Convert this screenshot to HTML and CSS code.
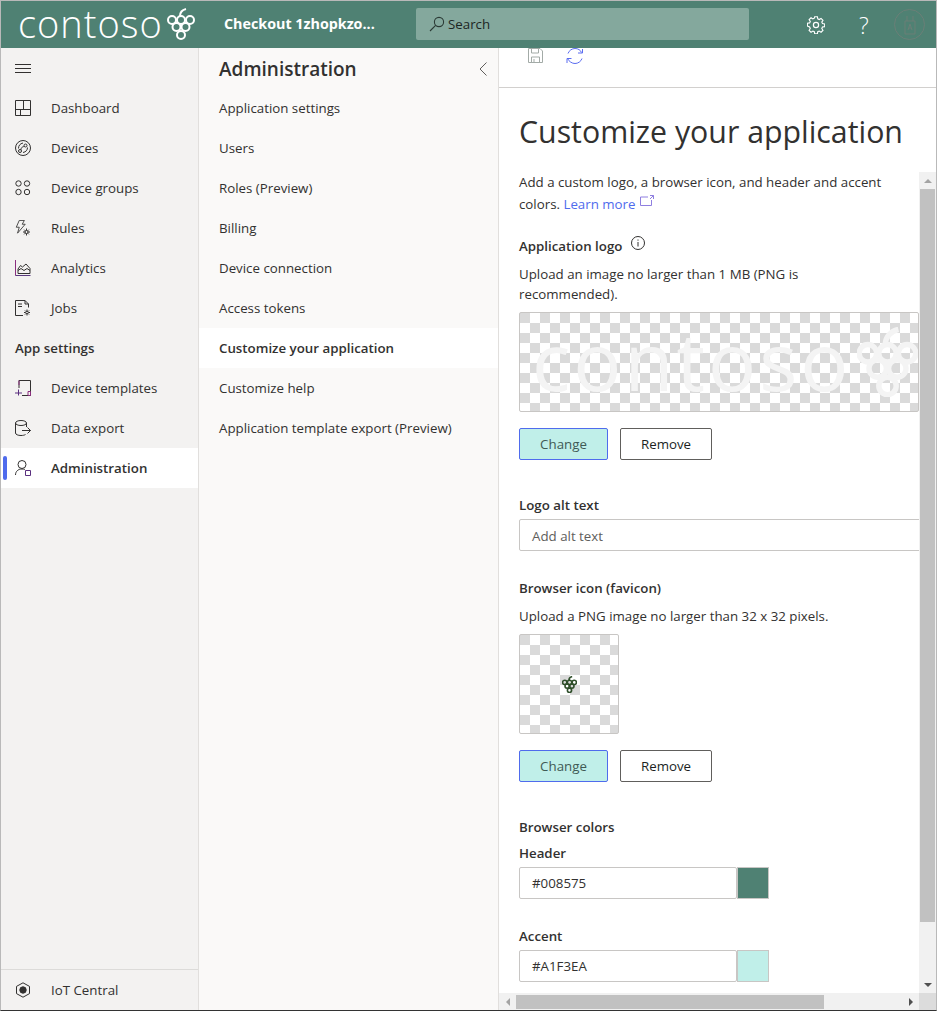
FILE: index.html
```html
<!DOCTYPE html>
<html lang="en">
<head>
  <meta charset="UTF-8">
  <title>Customize your application</title>
  <link rel="stylesheet" href="styles.css">
</head>
<body>
  <svg class="defs" width="0" height="0">
    <symbol id="grapes" viewBox="0 0 28 32">
      <g fill="none" stroke="currentColor">
        <path d="M13 8c0-3 2-6 6-7"/>
        <circle cx="5" cy="12" r="4"/>
        <circle cx="14" cy="12" r="4"/>
        <circle cx="23" cy="12" r="4"/>
        <circle cx="9.500" cy="19" r="4"/>
        <circle cx="18.500" cy="19" r="4"/>
        <circle cx="14" cy="27" r="4"/>
      </g>
    </symbol>
  </svg>

  <div class="window">
    <header class="topbar">
      <div class="brand">
        <span class="brand-name">contoso</span>
        <svg class="brand-mark"><use href="#grapes"/></svg>
      </div>
      <div class="app-name">Checkout 1zhopkzo...</div>
      <div class="search">
        <svg width="16" height="16" viewBox="0 0 16 16" fill="none" stroke="#2b3a35" stroke-width="1.100">
          <circle cx="10" cy="6" r="4.600"/>
          <path d="M6.600 9.400 1 15"/>
        </svg>
        <span>Search</span>
      </div>
      <div class="top-actions">
        <svg class="top-icon" width="18" height="18" viewBox="0 0 18 18" fill="none" stroke="#fff" stroke-width="1.200">
          <circle cx="9" cy="9" r="2.600"/>
          <path d="M7.600 1h2.800l.4 2.200 1.500.7 1.900-1.200 2 2-1.200 1.900.7 1.500 2.300.4v2.800l-2.300.4-.7 1.500 1.200 1.900-2 2-1.900-1.200-1.500.7-.4 2.200H7.600l-.4-2.200-1.500-.7-1.900 1.200-2-2 1.200-1.900-.7-1.500L0 10.600V7.800l2.300-.4.7-1.500-1.200-1.900 2-2 1.900 1.200 1.500-.7z" transform="translate(.4 -.2) scale(.96)"/>
        </svg>
        <span class="help">?</span>
        <div class="avatar">
          <svg width="12" height="20" viewBox="0 0 12 20" fill="none" stroke="#6a7f77" stroke-width="1">
            <path d="M1 6h10v13H1zM3 6V1M9 6V1M4 15l2-6 2 6M4.800 13h2.400"/>
          </svg>
        </div>
      </div>
    </header>

    <div class="body">
      <nav class="sidebar">
        <div class="nav-row">
          <svg class="nav-icon" viewBox="0 0 16 16" fill="none" stroke="#323130"><path d="M0 4.500h16M0 8.500h16M0 12.500h16"/></svg>
        </div>
        <a class="nav-row">
          <svg class="nav-icon" viewBox="0 0 16 16" fill="none" stroke="#323130"><path d="M.5.500h15v15H.5zM8.500.500v9M.5 9.500h15M5.500 9.500v6"/></svg>
          <span>Dashboard</span>
        </a>
        <a class="nav-row">
          <svg class="nav-icon" viewBox="0 0 16 16" fill="none" stroke="#323130"><circle cx="8" cy="8" r="7.500"/><circle cx="5" cy="11" r="1.500"/><circle cx="10.500" cy="5.500" r="1.500"/><path d="M6 9.800c0-1.500.5-2.300 1.500-2.800 1-.5 2-.6 2-.6M3.500 8.500c0-3 1.500-4.800 4.500-5.500M12.500 7.500c0 2.500-1.500 4.500-4.500 5"/></svg>
          <span>Devices</span>
        </a>
        <a class="nav-row">
          <svg class="nav-icon" viewBox="0 0 16 16" fill="none" stroke="#323130"><circle cx="3.500" cy="3.500" r="2.700"/><circle cx="12" cy="3.500" r="2.700"/><circle cx="3.500" cy="12" r="2.700"/><circle cx="12" cy="12" r="2.700"/></svg>
          <span>Device groups</span>
        </a>
        <a class="nav-row">
          <svg class="nav-icon" viewBox="0 0 16 16" fill="none" stroke="#323130"><path d="M5 .5h6L8.500 5H12L3 15.500l2-7H1.500z" transform="scale(.85)"/><circle cx="11.500" cy="12" r="1.500"/><path d="M11.500 8.500v2M11.500 13.500v2M8 12h2M13 12h2M9.200 9.700l1.200 1.200M12.600 13.100l1.200 1.200M9.200 14.300l1.200-1.200M12.600 10.900l1.200-1.200"/></svg>
          <span>Rules</span>
        </a>
        <a class="nav-row">
          <svg class="nav-icon" viewBox="0 0 16 16" fill="none" stroke="#323130"><path d="M.5 0v15.500" stroke="#8a2f7f"/><path d="M.5 15.500H15.500" stroke="#5a3a7f"/><path d="M3 13.500h12v-5L11 4 7.500 7 5.500 5.500 3 9zM3 10.500l3-2 3 2 3-2 3 2"/></svg>
          <span>Analytics</span>
        </a>
        <a class="nav-row">
          <svg class="nav-icon" viewBox="0 0 16 16" fill="none" stroke="#323130"><path d="M8 15.500H.5V.5H10l3.500 3.500v3.500M10 .5V4h3.500M3 4h4M3 6.500h4"/><circle cx="12" cy="12.500" r="1.300"/><path d="M12 9.500v1.500M12 14v1.500M9 12.500h1.500M13.500 12.500H15M10 10.500l1 1M13 13.500l1 1M10 14.500l1-1M13 11.500l1-1"/></svg>
          <span>Jobs</span>
        </a>
        <div class="nav-row nav-heading">App settings</div>
        <a class="nav-row">
          <svg class="nav-icon" viewBox="0 0 16 16" fill="none" stroke="#323130"><path d="M4 8V.5h11.500v15H7" /><path d="M4 .5V5" stroke="#8a2f7f"/><path d="M0 13h7M3.500 9.500v6" stroke="#5a2f7f"/><path d="M13 11.500h2.500v4H13z" stroke="#8a2f7f"/></svg>
          <span>Device templates</span>
        </a>
        <a class="nav-row">
          <svg class="nav-icon" viewBox="0 0 16 16" fill="none" stroke="#323130"><ellipse cx="6" cy="3" rx="5.500" ry="2.500"/><path d="M.5 3v10c0 1.500 2.500 2.500 5.500 2.500 2 0 3.500-.4 4.500-1M11.500 3v4M7 10.500h8.500M12.500 7.500l3 3-3 3"/></svg>
          <span>Data export</span>
        </a>
        <a class="nav-row nav-active">
          <svg class="nav-icon" viewBox="0 0 16 16" fill="none" stroke="#323130"><circle cx="7" cy="4.500" r="4"/><path d="M.5 15c0-3.500 2.500-6 6.500-6 1 0 2 .2 2.800.5"/><path d="M10.500 10.500h5v5h-5z" stroke="#5a2f7f"/></svg>
          <span>Administration</span>
        </a>
        <a class="nav-row nav-foot">
          <svg class="nav-icon" viewBox="0 0 16 16" fill="none" stroke="#323130"><path d="M8 .8 14.500 4.400v7.200L8 15.200 1.500 11.600V4.400z"/><circle cx="8" cy="8" r="3.200" fill="#323130"/></svg>
          <span>IoT Central</span>
        </a>
      </nav>

      <aside class="subnav">
        <div class="subnav-head">
          <h2>Administration</h2>
          <svg width="8" height="14" viewBox="0 0 8 14" fill="none" stroke="#605e5c"><path d="M7.500.5 1 7l6.500 6.500"/></svg>
        </div>
        <a class="sub-row">Application settings</a>
        <a class="sub-row">Users</a>
        <a class="sub-row">Roles (Preview)</a>
        <a class="sub-row">Billing</a>
        <a class="sub-row">Device connection</a>
        <a class="sub-row">Access tokens</a>
        <a class="sub-row sub-active">Customize your application</a>
        <a class="sub-row">Customize help</a>
        <a class="sub-row">Application template export (Preview)</a>
      </aside>

      <main class="main">
        <div class="toolbar">
          <svg width="15" height="15" viewBox="0 0 15 15" fill="none" stroke="#a3aba7"><path d="M.5.500h11.500l2.500 2.500v11.500H.5zM3.500.500v4.500h7V.500M3.500 14.500V9h8v5.500M6 11v3.500"/></svg>
          <svg width="18" height="16" viewBox="0 0 18 16" fill="none" stroke="#5a6cf0"><path d="M2 5.500C3 2.500 6 .5 9 .5c3 0 5.500 1.500 6.500 4M1.500 10.500c1.500 3 4.500 5 7.500 5 3 0 6-2 7-5"/><path d="M16.500 1v4H12M1 15v-4.500h4.500"/></svg>
        </div>
        <h1 class="page-title">Customize your application</h1>

        <div class="scroll-row">
          <div class="scroll-body">
            <p class="intro">Add a custom logo, a browser icon, and header and accent colors. <a class="link">Learn more</a>
              <svg class="ext" width="14" height="11" viewBox="0 0 14 11" fill="none" stroke="#8f7fe0"><path d="M8 2H.5v8.500h11V5M10 .5h3.500V4M13.500.5 10 4"/></svg>
            </p>

            <div class="label label-logo">Application logo
              <svg class="info" width="14" height="14" viewBox="0 0 14 14" fill="none" stroke="#323130"><circle cx="7" cy="7" r="6.500"/><path d="M7 6v4.500M7 3.500v1.200"/></svg>
            </div>
            <p class="hint">Upload an image no larger than 1 MB (PNG is recommended).</p>
            <div class="checker logo-box"><span class="logo-name">contoso</span><svg class="logo-mark"><use href="#grapes"/></svg></div>
            <div class="btns">
              <button class="btn btn-primary">Change</button>
              <button class="btn">Remove</button>
            </div>

            <div class="label label-alt">Logo alt text</div>
            <div class="field field-wide">Add alt text</div>

            <div class="label label-fav">Browser icon (favicon)</div>
            <p class="hint hint-fav">Upload a PNG image no larger than 32 x 32 pixels.</p>
            <div class="checker fav-box"><svg class="fav-mark"><use href="#grapes"/></svg></div>
            <div class="btns">
              <button class="btn btn-primary">Change</button>
              <button class="btn">Remove</button>
            </div>

            <div class="label label-colors">Browser colors</div>
            <div class="label label-sub">Header</div>
            <div class="color-row">
              <div class="field field-color">#008575</div>
              <div class="swatch swatch-header"></div>
            </div>
            <div class="label label-accent">Accent</div>
            <div class="color-row">
              <div class="field field-color">#A1F3EA</div>
              <div class="swatch swatch-accent"></div>
            </div>
          </div>
          <div class="vbar">
            <span class="sb-btn"><i class="arrow arrow-up"></i></span>
            <span class="vthumb"></span>
            <span class="sb-btn"><i class="arrow arrow-down"></i></span>
          </div>
        </div>

        <div class="hbar">
          <span class="sb-btn"><i class="arrow arrow-left"></i></span>
          <span class="hthumb"></span>
          <span class="sb-btn"><i class="arrow arrow-right"></i></span>
          <span class="corner"></span>
        </div>
      </main>
    </div>
  </div>
</body>
</html>
```

FILE: styles.css
```css
*{
  margin: 0;
  padding: 0;
  box-sizing: border-box;
}
html,body{
  height: 100%;
  background: #fff;
}
body{
  font-family: "Open Sans", "Liberation Sans", sans-serif;
  font-size: 13.3px;
  color: #323130;
}
.defs{
  position: absolute;
}

.window{
  width: 937px;
  height: 1011px;
  display: flex;
  flex-direction: column;
  border-top: 1px solid #b9b9b9;
  border-left: 1px solid #b9b9b9;
  border-right: 1px solid #b9b9b9;
  border-bottom: 1px solid #333;
}

/* top bar */
.topbar{
  height: 47px;
  flex: none;
  display: flex;
  align-items: center;
  background: #4f8173;
  color: #fff;
}
.brand{
  width: 222px;
  margin-bottom: 2px;
  padding-left: 17px;
  display: flex;
  align-items: center;
  gap: 4px;
}
.brand-name{
  font-size: 38px;
  font-weight: 300;
  line-height: 45px;
  letter-spacing: 1px;
}
.brand-mark{
  width: 28px;
  height: 32px;
  color: #fff;
  stroke-width: 2;
}
.app-name{
  width: 193px;
  margin-bottom: 3px;
  padding-left: 1px;
  font-size: 14.300px;
  font-weight: 700;
}
.search{
  width: 333px;
  height: 32px;
  margin-bottom: 1px;
  padding-left: 13px;
  display: flex;
  align-items: center;
  gap: 3px;
  background: #84a89d;
  border-radius: 2px;
  color: #1c2623;
}
.top-actions{
  flex: 1;
  display: flex;
  align-items: center;
  padding-left: 58px;
}
.top-icon{
  flex: none;
}
.help{
  width: 20px;
  margin-left: 34px;
  font-size: 23px;
  font-weight: 300;
  line-height: 30px;
}
.avatar{
  width: 31px;
  height: 31px;
  margin-left: 15px;
  display: flex;
  align-items: center;
  justify-content: center;
  border: 1px solid #6a7f77;
  border-radius: 50%;
}

.body{
  flex: 1;
  min-height: 0;
  display: flex;
}

/* left nav */
.sidebar{
  width: 198px;
  flex: none;
  display: flex;
  flex-direction: column;
  background: #f3f2f1;
  border-right: 1px solid #e1dfdd;
}
.nav-row{
  height: 40px;
  flex: none;
  display: flex;
  align-items: center;
  padding-left: 14px;
  position: relative;
}
.nav-icon{
  width: 16px;
  height: 16px;
  margin-right: 20px;
  flex: none;
}
.nav-heading{
  font-weight: 600;
}
.nav-active{
  background: #fff;
  font-weight: 600;
}
.nav-active::before{
  content: '';
  position: absolute;
  left: 2px;
  top: 8px;
  width: 4px;
  height: 24px;
  border-radius: 2px;
  background: #4f6bed;
}
.nav-foot{
  margin-top: auto;
  height: 41px;
  border-top: 1px solid #dcdbd9;
}

/* second column */
.subnav{
  width: 300px;
  flex: none;
  background: #faf9f8;
  border-right: 1px solid #e1dfdd;
}
.subnav-head{
  height: 40px;
  padding: 1px 11px 0 20px;
  display: flex;
  align-items: center;
  justify-content: space-between;
}
.subnav-head h2{
  font-size: 19px;
  font-weight: 600;
}
.sub-row{
  height: 40px;
  padding-left: 20px;
  display: flex;
  align-items: center;
}
.sub-active{
  background: #fff;
  font-weight: 600;
}

/* main column */
.main{
  flex: 1;
  min-width: 0;
  display: flex;
  flex-direction: column;
}
.toolbar{
  height: 40px;
  flex: none;
  padding-left: 29px;
  display: flex;
  align-items: flex-start;
  gap: 23px;
  border-bottom: 1px solid #d2d0ce;
}
.page-title{
  height: 84px;
  flex: none;
  padding: 22px 0 0 20px;
  font-size: 30.300px;
  font-weight: 400;
  line-height: 44px;
}
.scroll-row{
  flex: 1;
  min-height: 0;
  display: flex;
}
.scroll-body{
  flex: 1;
  min-width: 0;
  padding-left: 20px;
  overflow: hidden;
}
.intro{
  width: 385px;
  margin-top: -1px;
  line-height: 22px;
}
.link{
  color: #4f6bed;
}
.ext{
  margin-left: 1px;
  vertical-align: 3px;
}
.label{
  font-weight: 600;
  line-height: 20px;
}
.label-logo{
  margin-top: 21px;
}
.info{
  margin-left: 5px;
  vertical-align: 1px;
}
.hint{
  width: 340px;
  margin-top: 8px;
  line-height: 20px;
}
.checker{
  border: 1px solid #c8c6c4;
  border-radius: 2px;
  background: conic-gradient(#fff 25%, #dadada 0 50%, #fff 0 75%, #dadada 0) 0 0 / 20px 20px;
}
.logo-box{
  width: 400px;
  height: 100px;
  margin-top: 8px;
  padding: 0 0 4px 12px;
  display: flex;
  align-items: center;
  overflow: hidden;
  color: #f4f4f4;
}
.logo-name{
  font-size: 80px;
  font-weight: 400;
  line-height: 88px;
  letter-spacing: 3px;
}
.logo-mark{
  width: 61px;
  height: 70px;
  flex: none;
  margin: 4px 0 0 6px;
  stroke-width: 2.500;
}
.btns{
  display: flex;
  gap: 12px;
  margin-top: 16px;
}
.btn{
  width: 92px;
  height: 32px;
  font: inherit;
  color: #201f1e;
  background: #fff;
  border: 1px solid #605e5c;
  border-radius: 2px;
}
.btn-primary{
  width: 89px;
  color: #3f5a55;
  background: #c0efe9;
  border-color: #4f6bed;
}
.label-alt{
  margin-top: 35px;
}
.field{
  height: 32px;
  padding-left: 12px;
  display: flex;
  align-items: center;
  border: 1px solid #c8c6c4;
  border-radius: 2px;
  color: #323130;
}
.field-wide{
  width: 420px;
  margin-top: 4px;
  padding-top: 2px;
  color: #605e5c;
}
.label-fav{
  margin-top: 27px;
}
.hint-fav{
  width: 380px;
  margin-top: 8px;
}
.fav-box{
  width: 100px;
  height: 100px;
  margin-top: 8px;
  display: flex;
  align-items: center;
  justify-content: center;
}
.fav-mark{
  width: 15px;
  height: 17px;
  color: #2f4f2a;
  stroke-width: 3;
}
.label-colors{
  margin-top: 35px;
}
.label-sub{
  margin-top: 6px;
}
.label-accent{
  margin-top: 27px;
}
.color-row{
  display: flex;
  margin-top: 4px;
}
.field-color{
  width: 218px;
}
.swatch{
  width: 32px;
  height: 32px;
  border: 1px solid #c8c6c4;
}
.swatch-header{
  background: #4f8173;
}
.swatch-accent{
  background: #c0efe9;
}

/* scrollbars */
.vbar{
  width: 17px;
  flex: none;
  display: flex;
  flex-direction: column;
  background: #f1f1f1;
}
.vbar .sb-btn{
  height: 17px;
}
.vthumb{
  flex: 1;
  margin: 0 1px 54px;
  background: #c1c1c1;
}
.hbar{
  height: 17px;
  flex: none;
  display: flex;
  background: #f1f1f1;
}
.hbar .sb-btn{
  width: 17px;
}
.hthumb{
  width: 309px;
  margin: 2px 78px 1px 0;
  background: #c1c1c1;
}
.sb-btn{
  display: flex;
  flex: none;
  align-items: center;
  justify-content: center;
}
.corner{
  width: 17px;
  background: #dcdcdc;
}
.arrow{
  width: 0;
  height: 0;
  border: 4px solid transparent;
}
.arrow-up{
  border-top: 0;
  border-bottom: 4px solid #a3a3a3;
}
.arrow-down{
  border-bottom: 0;
  border-top: 4px solid #505050;
}
.arrow-left{
  border-left: 0;
  border-right: 4px solid #a3a3a3;
}
.arrow-right{
  border-right: 0;
  border-left: 4px solid #505050;
}
```
